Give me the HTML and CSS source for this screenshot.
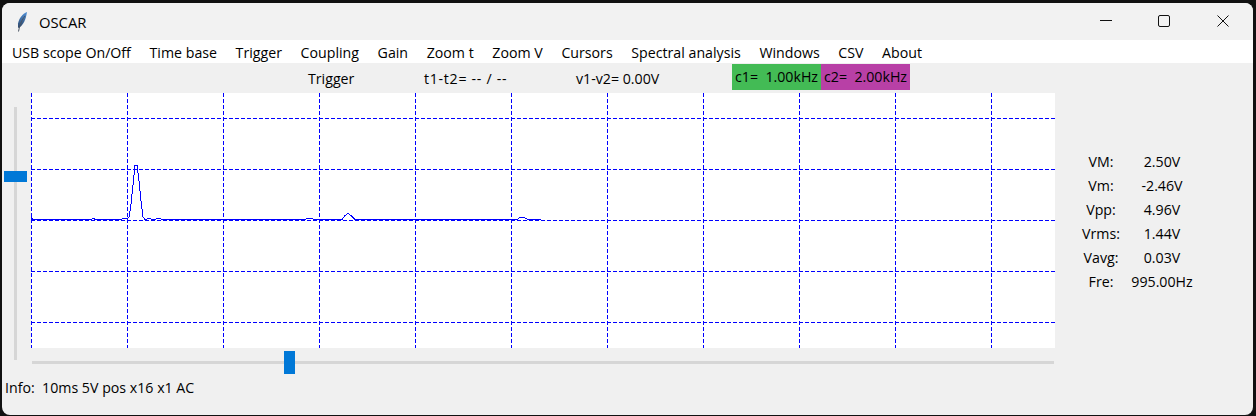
FILE: index.html
```html
<!DOCTYPE html>
<html lang="en">
<head>
    <meta charset="UTF-8">
    <title>OSCAR</title>
    <link rel="stylesheet" href="styles.css">
</head>
<body>
<div class="window">
    <header class="titlebar">
        <svg class="feather" width="16" height="22" viewBox="0 0 16 22">
            <defs>
                <linearGradient id="quill" x1="0" y1="0" x2="0" y2="1">
                    <stop offset="0" stop-color="#4f8fd6"/>
                    <stop offset="1" stop-color="#2d4668"/>
                </linearGradient>
            </defs>
            <path d="M13 1 C8.5 2.5 5 7.5 4 12.5 L4 17 L6 16 C9.5 13.5 12 8 13 1 Z" fill="url(#quill)"/>
            <path d="M11 5 C8 8.5 6 13 4.5 20.5" stroke="#4a5563" stroke-width="1" fill="none"/>
        </svg>
        <span class="title">OSCAR</span>
        <div class="controls">
            <svg width="14" height="14" viewBox="0 0 14 14"><path d="M2 6.5 H14" stroke="#111" stroke-width="1"/></svg>
            <svg width="14" height="14" viewBox="0 0 14 14"><rect x="1.5" y="1.5" width="11" height="11" rx="1.5" fill="none" stroke="#111" stroke-width="1"/></svg>
            <svg width="14" height="14" viewBox="0 0 14 14"><path d="M1.5 1.5 L12.5 12.5 M12.5 1.5 L1.5 12.5" stroke="#111" stroke-width="1"/></svg>
        </div>
    </header>

    <nav class="menu">
        <a href="#">USB scope On/Off</a>
        <a href="#">Time base</a>
        <a href="#">Trigger</a>
        <a href="#">Coupling</a>
        <a href="#">Gain</a>
        <a href="#">Zoom t</a>
        <a href="#">Zoom V</a>
        <a href="#">Cursors</a>
        <a href="#">Spectral analysis</a>
        <a href="#">Windows</a>
        <a href="#">CSV</a>
        <a href="#">About</a>
    </nav>

    <div class="status">
        <span class="st-trigger">Trigger</span>
        <span class="st-time">t1-t2= -- / --</span>
        <span class="st-volt">v1-v2= 0.00V</span>
        <span class="cursor c1">c1=&nbsp; 1.00kHz</span>
        <span class="cursor c2">c2=&nbsp; 2.00kHz</span>
    </div>

    <main class="scope">
        <div class="vslider"><div class="vtrack"></div><div class="vthumb"></div></div>
        <div class="middle">
            <svg class="plot" width="1024" height="255" viewBox="0 0 1024 255">
                <g class="grid">
                    <path d="M0.5 0 V255 M96.5 0 V255 M192.5 0 V255 M288.5 0 V255 M384.5 0 V255 M480.5 0 V255 M576.5 0 V255 M672.5 0 V255 M768.5 0 V255 M864.5 0 V255 M960.5 0 V255"/>
                    <path d="M0 25.5 H1024 M0 76.5 H1024 M0 127.5 H1024 M0 178.5 H1024 M0 229.5 H1024"/>
                </g>
                <polyline class="trace" points="0,124.5 2,126.5 60,126.5 62,125.5 65,126.5 90,126.5 92,125.5 96,125.5 98,124.5 100,111 102,92 104,72 106,72 108,88 110,108 112,124 114,126.5 118,125.5 122,126.5 128,125.5 132,126.5 274,126.5 276,125.5 281,125.5 283,126.5 311,126.5 314,122.5 317,120.5 320,122.5 324,126.5 486,126.5 489,124.5 493,124.5 497,126.5 510,126.5"/>
            </svg>
            <div class="hslider"><div class="htrack"></div><div class="hthumb"></div></div>
        </div>
        <table class="readings">
            <tr><td>VM:</td><td>2.50V</td></tr>
            <tr><td>Vm:</td><td>-2.46V</td></tr>
            <tr><td>Vpp:</td><td>4.96V</td></tr>
            <tr><td>Vrms:</td><td>1.44V</td></tr>
            <tr><td>Vavg:</td><td>0.03V</td></tr>
            <tr><td>Fre:</td><td>995.00Hz</td></tr>
        </table>
    </main>

    <footer class="info">Info:&nbsp; 10ms 5V pos x16 x1 AC</footer>
</div>
</body>
</html>
```

FILE: styles.css
```css
/* Reset */
* {
    margin: 0;
    padding: 0;
    box-sizing: border-box;
}

body {
    width: 1256px;
    height: 416px;
    overflow: hidden;
    background: #111;
    padding: 3px 3px 1px 2px;
    font-family: "Open Sans", sans-serif;
    font-size: 14.2px;
    color: #000;
}

.window {
    height: 412px;
    background: #f0f0f0;
    border-radius: 8px;
    overflow: hidden;
}

/* Title bar */
.titlebar {
    height: 37px;
    background: #f2f2f2;
    display: flex;
    align-items: center;
    padding-left: 12px;
}

.feather {
    margin-right: 9px;
}

.title {
    font-size: 14.8px;
}

.controls {
    margin-left: auto;
    margin-bottom: 2px;
    display: flex;
    gap: 45px;
    padding-right: 23px;
}

/* Menu */
.menu {
    height: 23px;
    background: #fff;
    display: flex;
    align-items: center;
    gap: 18.6px;
    padding: 1px 0 0 10px;
}

.menu a {
    color: #000;
    text-decoration: none;
}

/* Status row */
.status {
    height: 30px;
    display: flex;
    align-items: center;
}

.st-trigger {
    margin-left: 306px;
    width: 116px;
}

.st-time {
    width: 152px;
    letter-spacing: 0.7px;
}

.st-volt {
    width: 156px;
}

.cursor {
    width: 89px;
    height: 26px;
    margin-bottom: 2px;
    padding-left: 3px;
    line-height: 26px;
    white-space: nowrap;
    overflow: hidden;
}

.c1 {
    background: #43bb55;
}

.c2 {
    background: #b840a6;
}

/* Scope area */
.scope {
    display: flex;
    height: 281px;
}

.vslider {
    width: 29px;
    position: relative;
}

.vtrack {
    position: absolute;
    left: 12px;
    top: 14px;
    width: 3px;
    height: 253px;
    background: #d6d6d6;
}

.vthumb {
    position: absolute;
    left: 2px;
    top: 78px;
    width: 23px;
    height: 11px;
    background: #0078d7;
}

.middle {
    width: 1024px;
}

.plot {
    display: block;
    background: #fff;
}

.grid path {
    stroke: #0000ff;
    stroke-width: 1;
    stroke-dasharray: 4 2;
    fill: none;
}

.trace {
    fill: none;
    stroke: #0000ff;
    stroke-width: 1;
    shape-rendering: crispEdges;
}

.hslider {
    position: relative;
    height: 26px;
}

.htrack {
    position: absolute;
    left: 1px;
    top: 13px;
    width: 1022px;
    height: 3px;
    background: #d6d6d6;
}

.hthumb {
    position: absolute;
    left: 253px;
    top: 3px;
    width: 11px;
    height: 23px;
    background: #0078d7;
}

/* Readings */
.readings {
    margin-left: 23px;
    margin-top: 56px;
    height: 144px;
    border-collapse: collapse;
    text-align: center;
    align-self: flex-start;
}

.readings td:first-child {
    width: 46px;
}

.readings td:last-child {
    width: 76px;
}

.readings td {
    height: 24px;
}

/* Footer */
.info {
    padding-left: 3px;
    padding-top: 4px;
}
```
